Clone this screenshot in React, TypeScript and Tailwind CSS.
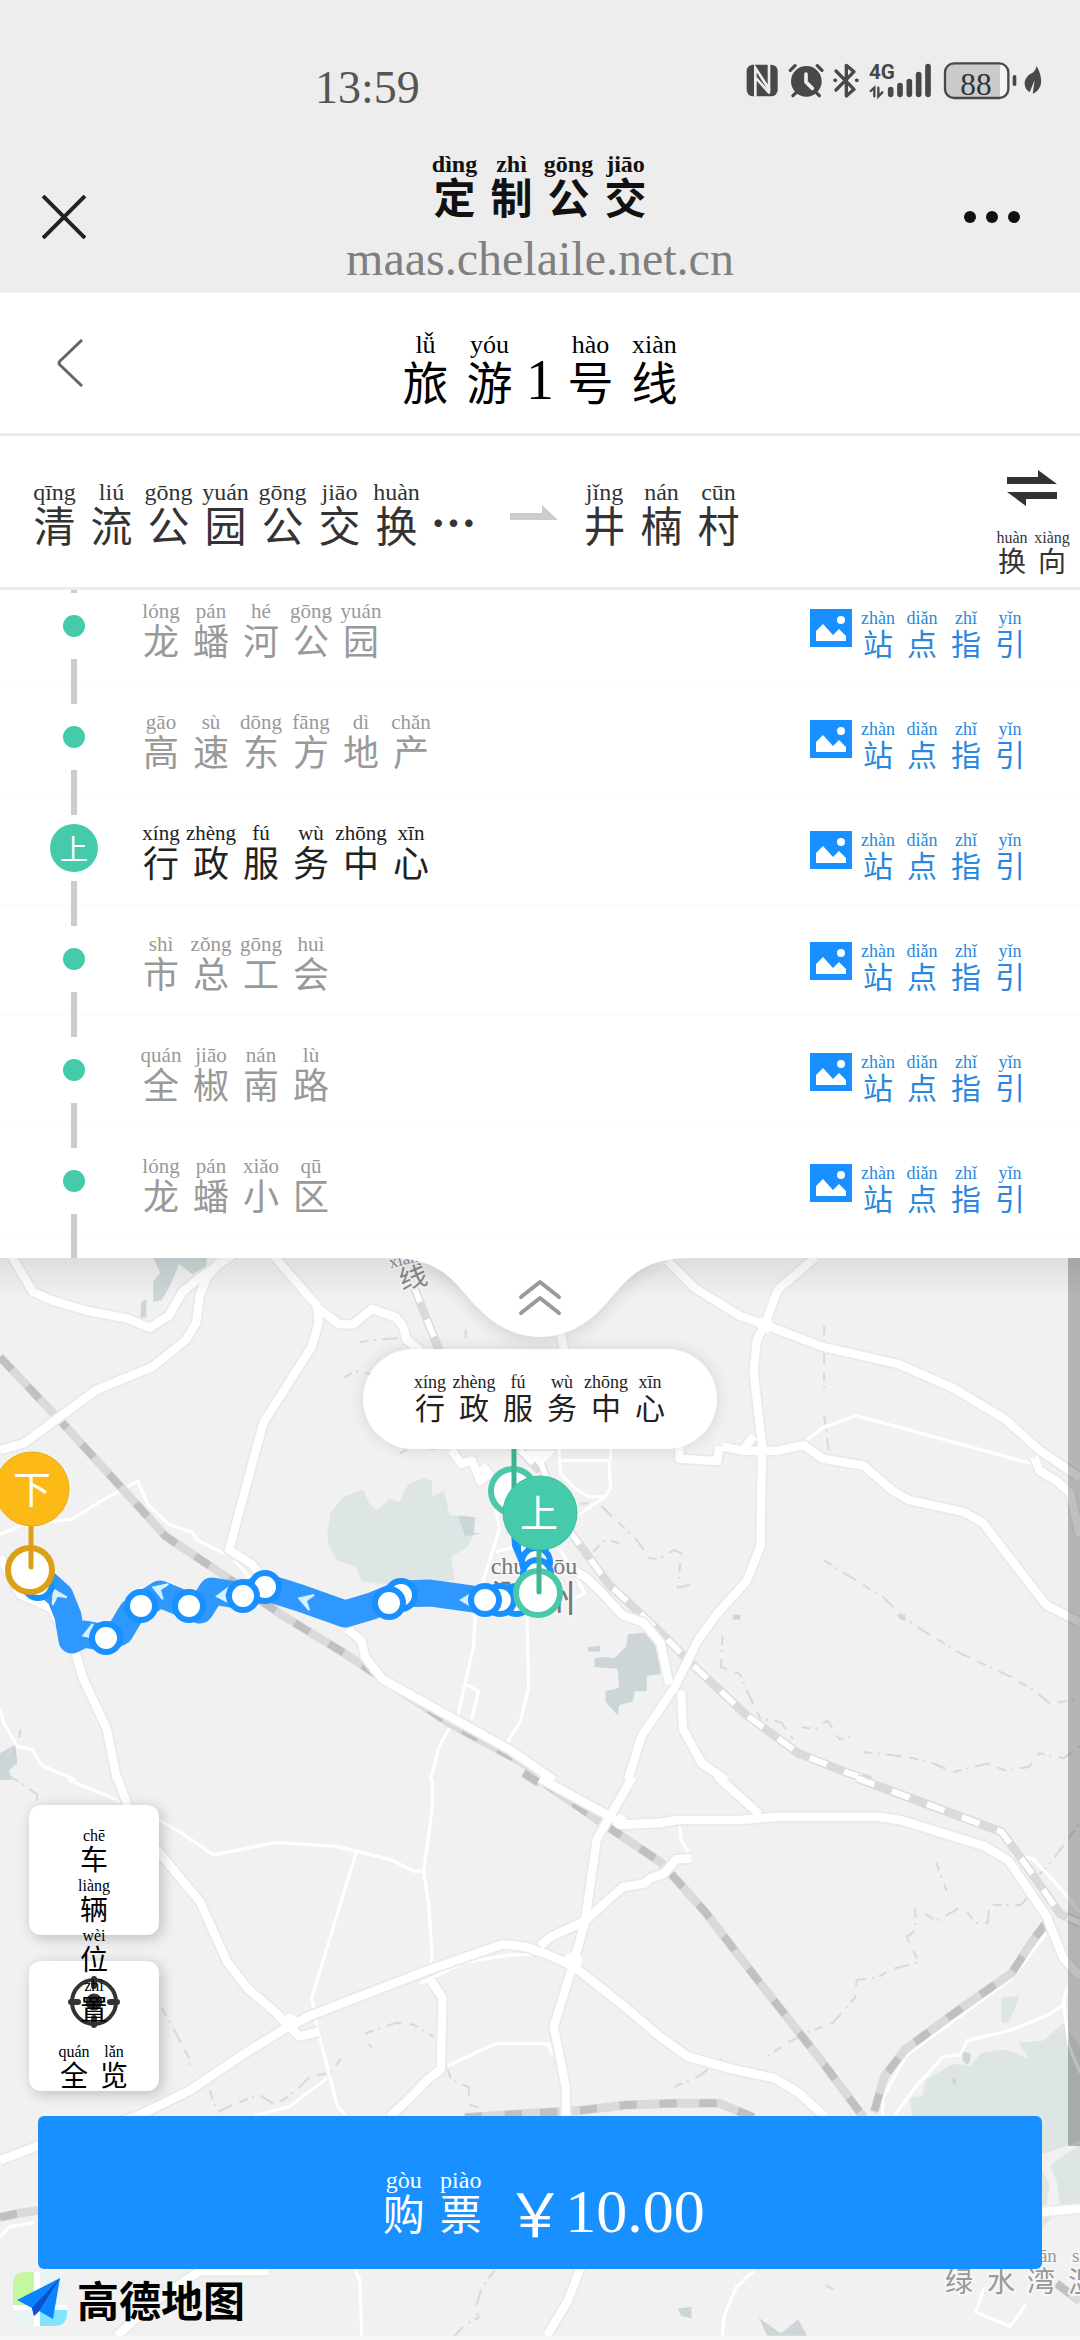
import clsx from 'clsx'

type Syllable = [string, string]
type RubySize = 'xs' | 'sm' | 'md' | 'lg' | 'xl'

interface Stop {
  name: Syllable[]
  boarding?: boolean
}

interface Tile {
  transform: string
  lakes?: string[]
  ponds?: string[]
  streams: string[]
  rails: string[]
  lightRails: string[]
  minor: string[]
  roads: string[]
}

const cjk = "font-['Noto_Sans_CJK_SC',sans-serif]"
const serif = "font-['Liberation_Serif','Noto_Sans_CJK_SC',serif]"

const cellStyles: Record<RubySize, string> = {
  xs: 'w-10',
  sm: 'w-11',
  md: 'w-[50px]',
  lg: 'w-[57px]',
  xl: 'w-16',
}

const pinyinStyles: Record<RubySize, string> = {
  xs: 'text-[16px] leading-[16px] h-4',
  sm: 'text-[18px] leading-[18px] h-[18px]',
  md: 'text-[21px] leading-[20px] h-5',
  lg: 'text-[24px] leading-[22px] h-[22px]',
  xl: 'text-[26px] leading-[24px] h-6',
}

const charStyles: Record<RubySize, string> = {
  xs: 'text-[28px] leading-[28px]',
  sm: 'text-[30px] leading-[30px]',
  md: 'text-[36px] leading-[36px]',
  lg: 'text-[42px] leading-[42px]',
  xl: 'text-[46px] leading-[46px]',
}

const stops: Stop[] = [
  { name: [['龙', 'lóng'], ['蟠', 'pán'], ['河', 'hé'], ['公', 'gōng'], ['园', 'yuán']] },
  { name: [['高', 'gāo'], ['速', 'sù'], ['东', 'dōng'], ['方', 'fāng'], ['地', 'dì'], ['产', 'chǎn']] },
  {
    name: [['行', 'xíng'], ['政', 'zhèng'], ['服', 'fú'], ['务', 'wù'], ['中', 'zhōng'], ['心', 'xīn']],
    boarding: true,
  },
  { name: [['市', 'shì'], ['总', 'zǒng'], ['工', 'gōng'], ['会', 'huì']] },
  { name: [['全', 'quán'], ['椒', 'jiāo'], ['南', 'nán'], ['路', 'lù']] },
  { name: [['龙', 'lóng'], ['蟠', 'pán'], ['小', 'xiǎo'], ['区', 'qū']] },
]

const guide: Syllable[] = [['站', 'zhàn'], ['点', 'diǎn'], ['指', 'zhǐ'], ['引', 'yǐn']]

const tiles: Tile[] = [
  {
    transform: 'translate(0 1240) scale(.3444)',
    lakes: [
      '950,850 960,790 1000,745 1055,725 1075,770 1095,785 1130,752 1160,760 1185,710 1230,690 1255,700 1255,745 1290,728 1305,800 1330,800 1365,812 1380,840 1360,890 1310,920 1320,985 1250,1000 1190,1010 1050,990 1035,950 980,930 955,890',
    ],
    ponds: [
      '440,40 600,40 600,75 560,100 520,70 495,130 470,175 445,180 445,120 465,95',
      '410,180 425,172 425,225 408,225',
      '0,1490 45,1465 50,1520 25,1540 35,1568 0,1568',
      '1330,800 1380,805 1375,850 1400,852 1350,860',
    ],
    streams: ['1045,297 1090,290 1150,285 1165,310', '1000,400 1030,380 1090,392', '1352,260 1352,300', '60,1420 55,1450 20,1500', '1160,620 1200,600 1290,610'],
    rails: ['0,340 180,530 390,760 480,860 660,980 820,1090 1000,1200 1300,1400 1568,1545'],
    lightRails: ['1200,130 1235,220 1275,320', '1510,610 1568,670'],
    minor: [
      '0,855 60,830 210,810 290,760 400,700 430,770 490,825 560,850 570,870 660,915',
      '680,930 720,975 780,1010',
      '1380,1090 1375,1180 1350,1290 1390,1310 1370,1390',
      '1350,1290 1330,1380 1310,1410 1275,1470 1250,1568',
      '1530,1090 1535,1300 1510,1400 1465,1470',
      '0,1360 10,1400 50,1470 95,1480 120,1525 220,1568',
      '1440,780 1450,840 1400,1000 1380,1090',
      '1440,905 1500,890',
    ],
    roads: [
      '30,40 95,150 150,175 250,205 370,228 435,255 490,220 530,150 580,110 680,40',
      '640,60 600,110 580,160 570,240 540,290 440,370 280,435 70,590 0,610',
      '790,40 850,110 920,190 925,240 905,310 765,530 735,640 665,900 730,940 770,990',
      '920,195 985,245 1025,245 1080,200 1150,225 1170,250 1180,290 1220,320',
      '0,920 60,1030 150,1070 220,1200 240,1270 310,1420 340,1568',
      '1010,1130 1050,1165 1060,1210 1110,1275 1480,1480 1568,1540',
      '1310,610 1340,650 1370,640 1395,700 1420,680 1400,655',
    ],
  },
  {
    transform: 'translate(540 1240) scale(.3444)',
    ponds: [
      '255,1145 310,1140 350,1200 350,1260 310,1265 310,1310 275,1310 270,1340 230,1350 225,1380 190,1340 190,1310 230,1300 225,1245 158,1240 158,1215 190,1210 215,1215 250,1180',
      '138,1182 175,1178 175,1195 140,1195',
      '560,1088 582,1088 582,1102 560,1102',
      '1035,1088 1060,1088 1060,1104 1050,1104',
    ],
    streams: [
      '115,765 170,765 280,870 320,925 345,925 390,900 410,910 400,1010 460,995',
      '155,905 190,870 230,880',
      '530,1150 525,1240 580,1260 620,1350 640,1390 700,1400 735,1450',
      '825,930 1000,1040 1060,1100 1130,1145 1220,1200 1370,1270 1430,1305 1480,1345 1568,1335',
      '760,1415 800,1420 835,1395 850,1420 870,1450 910,1440',
      '940,1487 1060,1500 1130,1515 1200,1545 1300,1520 1350,1540 1420,1530 1450,1490 1520,1505 1568,1470',
      '825,250 825,440',
      '825,510 838,610',
    ],
    rails: [],
    lightRails: ['0,640 45,760 90,850 200,1000 340,1130 450,1240 600,1380 750,1490 900,1550 960,1568'],
    minor: [
      '770,585 820,545 920,510 1100,560 1430,650',
      '55,640 200,640 205,720 190,745 110,800',
      '55,600 60,680 100,720 140,745 190,745',
      '205,600 205,640',
      '60,900 130,1025 100,1040',
    ],
    roads: [
      '370,60 450,140 580,220 650,245 820,310 1040,360 1200,430 1350,520 1450,610 1568,690',
      '800,50 690,145 655,240 630,290 620,380 645,600 640,890 600,990 510,1090 460,1160 390,1300 295,1440 255,1568',
      '410,1310 415,1420 470,1520 540,1568',
      '530,600 590,612 690,612 765,595 820,635 940,655 1020,725 1070,755 1230,790 1285,820 1400,970 1470,1060 1568,1110',
      '100,960 140,985 185,1030 240,1090 300,1110 350,1170 375,1290',
      '405,600 405,635 515,642 520,600',
      '1435,630 1450,670 1500,700 1540,735 1568,860',
      '60,270 70,320',
      '590,610 620,570',
      '0,1540 40,1568',
    ],
  },
  {
    transform: 'translate(0 1780) scale(.3444 .3571)',
    streams: [
      '470,640 500,690 550,780 550,820',
      '610,870 630,930 700,900 750,880 800,910 860,870 900,830 960,820 990,780',
      '1060,710 1150,680 1200,685 1260,720',
      '1300,810 1310,840 1360,860 1365,910 1400,920',
      '1435,1375 1400,1420 1380,1480 1390,1505 1350,1525 1320,1556',
      '30,-10 108,40 108,80',
      '1070,740 1080,750',
    ],
    rails: ['0,1225 45,1215 110,1205', '1350,945 1568,932', '1520,-20 1568,10'],
    lightRails: [],
    minor: [
      '200,0 350,60',
      '460,110 530,150 620,210 800,175 970,185 1040,200 1140,225 1200,255 1225,255',
      '1255,0 1255,80 1230,255 1245,350 1255,490 1250,520',
      '1035,200 905,610 920,690 980,915 1005,940',
      '950,835 840,915 740,940',
      '1300,800 1440,738 1568,738',
      '1030,1370 1045,1400 1050,1556',
      '0,1280 30,1250 100,1240',
      '1220,570 1350,510 1480,490 1568,488',
    ],
    roads: [
      '340,-10 370,70 410,140 460,200 580,340 660,510 720,585 800,650 840,690',
      '0,1065 110,1025 390,945 550,870 720,760 830,695 900,660 1250,530 1460,460 1530,468 1568,482',
      '1250,560 1285,610 1280,810 1240,840 1190,890 1130,945',
      '340,1556 450,1460 580,1375 780,1375',
      '840,690 870,718 925,705',
    ],
  },
  {
    transform: 'translate(540 1780) scale(.3444 .3571)',
    lakes: [
      '1080,945 1075,890 1110,885 1120,840 1200,795 1250,800 1280,765 1350,755 1420,780 1390,735 1460,730 1520,680 1568,750 1568,1010 1470,1045 1400,1050 1200,1060',
      '1480,1080 1568,1020 1568,1190 1510,1190 1500,1120',
      '1455,1090 1480,1130 1470,1190 1455,1190',
      '1340,610 1390,605 1388,620 1360,680 1340,680',
      '1455,1215 1485,1225 1455,1260',
    ],
    ponds: [
      '1225,760 1250,765 1250,785 1240,798 1228,785',
      '635,1506 700,1550 750,1510 775,1556 660,1556',
      '400,1480 440,1475 440,1508 410,1500',
      '1198,835 1208,835 1208,852 1198,852',
    ],
    streams: [
      '1150,230 1180,310',
      '1090,360 1090,420 1065,440 1100,510 1020,530 980,553 920,560 915,610 850,680 780,705 720,735 650,780',
      '1120,375 1150,395 1215,360',
      '1240,370 1265,400 1300,400 1305,350 1395,350 1415,330',
      '1450,265 1480,235 1568,120',
      '390,860 400,855 460,830 530,780',
      '830,1415 855,1428',
    ],
    rails: [
      '0,0 180,120 350,230 480,370 640,570 820,790 940,945',
      '0,932 120,925 250,910 400,905 520,905 620,945',
      '1470,400 1430,450 1370,540 1200,655 1060,755 1000,830 970,930',
      '1500,1410 1568,1460',
    ],
    lightRails: ['920,-5 1340,145 1420,250 1510,375 1568,400'],
    minor: [
      '405,130 410,170 430,200',
      '1470,430 1370,555 1065,770 995,890 995,940',
      '1030,940 1090,860 1170,775 1220,770 1240,730 1370,700 1480,655 1520,630',
      '0,738 25,740 35,770',
      '1370,210 1430,220 1480,270 1568,370',
      '620,1375 570,1420 535,1500 530,1556',
      '1290,1420 1265,1490 1365,1530 1410,1470',
      '1530,580 1520,620 1535,740 1568,820',
    ],
    roads: [
      '0,-5 190,95 240,125 350,120 400,112 580,112 690,103 980,103 1050,113 1290,185 1360,225 1470,380 1520,500 1568,550',
      '270,-10 165,165 130,400 95,520 40,690 75,860 75,945',
      '0,480 95,520 240,630 350,720 430,775 560,810 680,835 750,875 830,945',
      '515,-10 630,90 630,110',
      '0,465 30,440 130,395 240,300 305,290 320,275 360,262 395,222 440,220',
      '120,1360 80,1460 20,1556',
      '1455,1210 1568,1200',
    ],
  },
]

const routePath = 'M40 1578L60 1596L68 1616L72 1640L84 1634L106 1638L120 1632L132 1612L141 1606L160 1594L189 1606L200 1610L212 1591L243 1596L265 1587L300 1598L345 1614L372 1606L389 1599L401 1594L430 1593L480 1600L538 1600'

const routeStops = [
  [38, 1584], [106, 1638], [141, 1606], [189, 1606], [265, 1587], [243, 1596], [401, 1595], [389, 1603],
  [516, 1600], [500, 1600], [485, 1600], [532, 1548], [536, 1562], [537, 1574],
]

const arrows = [
  [56, 1594, 62], [88, 1634, -20], [158, 1589, 20], [222, 1596, -5], [304, 1600, 18], [466, 1600, 0],
]

function Ruby({ text, size, className }: { text: Syllable[]; size: RubySize; className?: string }) {
  return (
    <span className={clsx('flex items-end', className)}>
      {text.map(([char, pinyin], i) => (
        <span key={i} className={clsx('flex shrink-0 flex-col items-center whitespace-nowrap', cellStyles[size])}>
          {pinyin && <span className={pinyinStyles[size]}>{pinyin}</span>}
          <span className={clsx(cjk, charStyles[size])}>{char}</span>
        </span>
      ))}
    </span>
  )
}

function StatusIcons() {
  return (
    <div className="flex items-center text-[#484848]">
      <svg className="h-10 w-[34px]" viewBox="70 60 102 120" fill="none">
        <rect x="72" y="74" width="93" height="95" rx="19" fill="currentColor" />
        <path d="M98 170V84L141 150M98 112L141 160M139 72V160" stroke="#ededed" strokeWidth="8" />
      </svg>
      <svg className="ml-2 h-10 w-9" viewBox="200 60 108 120" fill="none" stroke="currentColor" strokeLinecap="round">
        <circle cx="255" cy="124" r="46" fill="currentColor" stroke="none" />
        <path d="M207 91L221 77M302 91L288 77M215 167L228 154M294 167L281 154" strokeWidth="10" />
        <path d="M254 102V126L273 145" stroke="#ededed" strokeWidth="11" />
      </svg>
      <svg className="ml-2 h-10 w-7" viewBox="338 60 84 120" fill="none" stroke="currentColor" strokeWidth="10" strokeLinejoin="round" strokeLinecap="round">
        <path d="M350 93L404 148L381 168V76L404 95L350 150" />
        <path d="M347 121H348M412 121H413" strokeWidth="11" />
      </svg>
      <svg className="ml-2 h-10 w-[66px]" viewBox="444 60 198 120" fill="none" stroke="currentColor" strokeLinecap="round">
        <text x="447" y="118" fontSize="62" fontWeight="700" fill="currentColor" stroke="none" className="font-['Roboto',sans-serif]">4G</text>
        <path d="M452 153L463 143V169M475 143V169L487 157" strokeWidth="7" />
        <path d="M512 149V163M540 137V163M568 125V163M596 104V163M624 80V163" strokeWidth="17" />
      </svg>
      <svg className="ml-2 h-10 w-[76px]" viewBox="664 60 228 120" fill="none">
        <rect x="673" y="70" width="190" height="104" rx="27" fill="#f4f4f4" />
        <path d="M700 70H838V174H700Q673 174 673 147V97Q673 70 700 70Z" fill="#cbcbcb" />
        <rect x="673" y="70" width="190" height="104" rx="27" stroke="currentColor" strokeWidth="7" />
        <rect x="876" y="105" width="11" height="33" rx="5" fill="currentColor" />
        <text x="766" y="166" fontSize="94" textAnchor="middle" fill="#333" className="font-['Liberation_Serif',serif]">88</text>
      </svg>
      <svg className="ml-1 h-10 w-[22px]" viewBox="900 60 66 120">
        <path d="M944 78Q962 110 956 136Q948 156 932 161L938 120L923 157Q906 146 908 126Q912 106 932 98Q941 92 944 78Z" fill="currentColor" />
      </svg>
    </div>
  )
}

function StopRow({ stop }: { stop: Stop }) {
  return (
    <li className="flex h-[111px] border-b border-[#fafafa]">
      <div className="ml-[46px] flex w-14 flex-col items-center justify-between">
        <span className="h-[21px] w-1.5 bg-[#ccc]" />
        {stop.boarding ? (
          <span className={clsx('flex size-12 items-center justify-center rounded-full bg-[#45cbac] text-[28px] leading-[28px] text-white', cjk)}>上</span>
        ) : (
          <span className="size-[22px] rounded-full bg-[#45cbac]" />
        )}
        <span className="-mb-px h-6 w-1.5 bg-[#ccc]" />
      </div>
      <Ruby
        text={stop.name}
        size="md"
        className={clsx('ml-[34px] mt-[29px] self-start', stop.boarding ? 'text-[#222]' : 'text-[#999]')}
      />
      <a href="#guide" className="mr-12 ml-auto mt-[37px] flex items-start gap-1 self-start text-[#2b88dc]">
        <svg className="h-[38px] w-[42px]" viewBox="0 0 42 38">
          <path d="M0 0H42V38H0Z" fill="#1890ff" />
          <path d="M6 32V22L13 15L23 26L29 20L36 27V32Z" fill="#fff" />
          <circle cx="31" cy="11" r="4" fill="#fff" />
        </svg>
        <Ruby text={guide} size="sm" />
      </a>
    </li>
  )
}

function Lines({ points, stroke, width, dash }: { points: string[]; stroke: string; width: number; dash?: string }) {
  return (
    <>
      {points.map((p) => (
        <polyline key={p} points={p} fill="none" stroke={stroke} strokeWidth={width} strokeDasharray={dash} strokeLinejoin="round" />
      ))}
    </>
  )
}

function Ring({ x, y, color }: { x: number; y: number; color: string }) {
  return <circle cx={x} cy={y} r="22" fill="#fff" stroke={color} strokeWidth="6" />
}

function MapCanvas() {
  return (
    <svg className="absolute inset-0 size-full" viewBox="0 1258 1080 1082" preserveAspectRatio="xMidYMid slice">
      {tiles.map((t) => (
        <g key={t.transform} transform={t.transform}>
          {t.lakes?.map((p) => <polygon key={p} points={p} fill="#dde6e5" />)}
          {t.ponds?.map((p) => <polygon key={p} points={p} fill="#ccd6d8" />)}
          <Lines points={t.streams} stroke="#d3dcdd" width={6} dash="26 14 6 20 44 24" />
          <Lines points={t.minor} stroke="#fff" width={9} />
          <Lines points={t.rails} stroke="#dadada" width={25} />
          <Lines points={t.rails} stroke="#c0c0c0" width={22} dash="50 66" />
          <Lines points={t.lightRails} stroke="#dadada" width={25} />
          <Lines points={t.lightRails} stroke="#fff" width={17} dash="54 54" />
        </g>
      ))}
      {tiles.map((t) => (
        <g key={t.transform} transform={t.transform}>
          <Lines points={t.roads} stroke="#e6ebe6" width={34} />
        </g>
      ))}
      {tiles.map((t) => (
        <g key={t.transform} transform={t.transform}>
          <Lines points={t.roads} stroke="#fff" width={24} />
        </g>
      ))}
      <g fill="#fff">
        <circle cx="765" cy="1325" r="8" />
        <circle cx="573" cy="1961" r="9" />
        <circle cx="290" cy="2023" r="9" />
        <circle cx="620" cy="1822" r="7" />
      </g>

      <g className={cjk} fill="#8a8a8a" stroke="#f6f6f6" strokeWidth="4" paintOrder="stroke" textAnchor="middle">
        <g transform="rotate(-14 413 1277)">
          <text x="413" y="1287" fontSize="28">线</text>
          <text x="408" y="1263" fontSize="17" className={serif}>xiàn</text>
        </g>
        <g fill="#777">
          <text x="510" y="1612" fontSize="38">滁</text>
          <text x="557" y="1612" fontSize="38">州</text>
          <text x="508" y="1574" fontSize="24" className={serif}>chú</text>
          <text x="554" y="1574" fontSize="24" className={serif}>zhōu</text>
        </g>
        <g fill="#999">
          <text x="959" y="2292" fontSize="28">绿</text>
          <text x="1001" y="2292" fontSize="28">水</text>
          <text x="1041" y="2292" fontSize="28">湾</text>
          <text x="1082" y="2292" fontSize="28">湿</text>
          <text x="1041" y="2262" fontSize="19" className={serif}>wān</text>
          <text x="1083" y="2262" fontSize="19" className={serif}>shī</text>
        </g>
      </g>

      <path d={routePath} fill="none" stroke="#2e98ff" strokeWidth="27" strokeLinejoin="round" strokeLinecap="round" />
      <path d="M513 1492L517 1545L538 1595" fill="none" stroke="#1890ff" strokeWidth="10" />
      {arrows.map(([x, y, angle]) => (
        <path key={x} d="M8 -8L-5 0L8 8L2 0Z" transform={`translate(${x} ${y}) rotate(${angle})`} fill="#d5f0ff" stroke="#d5f0ff" strokeWidth="2" />
      ))}
      {routeStops.map(([x, y]) => (
        <circle key={x} cx={x} cy={y} r="14" fill="#fff" stroke="#1890ff" strokeWidth="6" />
      ))}

      <Ring x={513} y={1491} color="#4ac8a9" />
      <path d="M514 1440V1491" stroke="#40b394" strokeWidth="5" />
      <Ring x={538} y={1593} color="#4ac8a9" />
      <path d="M539 1545V1592" stroke="#40b394" strokeWidth="5" strokeLinecap="round" />
      <circle cx="540" cy="1513" r="37" fill="#45cbac" stroke="#3dbd9e" />
      <Ring x={30} y={1570} color="#dba016" />
      <path d="M31 1525V1567" stroke="#dba016" strokeWidth="5" strokeLinecap="round" />
      <circle cx="32" cy="1489" r="37" fill="#fdb915" stroke="#e9ab14" />
      <g className={cjk} fill="#fff" fontSize="38" textAnchor="middle">
        <text x="539" y="1527">上</text>
        <text x="32" y="1503">下</text>
      </g>
      <path d="M525 1451H555L540 1467Z" fill="#fff" />
    </svg>
  )
}

export default function App() {
  return (
    <div className={clsx('flex min-h-screen flex-col bg-white', serif)}>
      <header className="flex h-[293px] flex-col bg-[#ededed]">
        <div className="flex items-start justify-between pt-[60px] pr-9 pl-[315px]">
          <time className="pt-1.5 text-[46px] leading-[44px] text-[#555]">13:59</time>
          <StatusIcons />
        </div>
        <div className="flex items-start justify-between px-[42px] pt-[43px]">
          <button type="button" aria-label="关闭" className="w-[100px] pt-[42px]">
            <svg className="size-11" viewBox="0 0 44 44" fill="none" stroke="#222" strokeWidth="4">
              <path d="M1 1L43 43M43 1L1 43" />
            </svg>
          </button>
          <div className="flex flex-col items-center">
            <Ruby size="lg" className="font-bold text-[#111]" text={[['定', 'dìng'], ['制', 'zhì'], ['公', 'gōng'], ['交', 'jiāo']]} />
            <p className="mt-[18px] text-[48px] leading-[48px] text-[#7f7f7f]">maas.chelaile.net.cn</p>
          </div>
          <button type="button" aria-label="更多" className="flex w-[100px] justify-end pt-[58px] pr-[18px]">
            <svg className="h-3 w-14" viewBox="0 0 56 12" fill="#111">
              <circle cx="6" cy="6" r="6" />
              <circle cx="28" cy="6" r="6" />
              <circle cx="50" cy="6" r="6" />
            </svg>
          </button>
        </div>
      </header>

      <nav className="flex h-[143px] items-center border-b-3 border-[#ebebeb] px-14">
        <button type="button" aria-label="返回" className="w-[100px]">
          <svg className="h-12 w-7" viewBox="0 0 28 48" fill="none" stroke="#666" strokeWidth="3">
            <path d="M26 1L4 22Q2 24 4 26L26 47" />
          </svg>
        </button>
        <h1 className="flex flex-1 items-end justify-center pt-[10px] text-black">
          <Ruby size="xl" text={[['旅', 'lǚ'], ['游', 'yóu']]} />
          <span className="w-[37px] text-center text-[56px] leading-[46px]">1</span>
          <Ruby size="xl" text={[['号', 'hào'], ['线', 'xiàn']]} />
        </h1>
        <span className="w-[100px]" />
      </nav>

      <section className="flex h-[154px] items-center border-b-3 border-[#ebebeb] pt-0.5 pl-[26px] text-[#333]">
        <div className="flex items-end">
          <Ruby
            size="lg"
            text={[['清', 'qīng'], ['流', 'liú'], ['公', 'gōng'], ['园', 'yuán'], ['公', 'gōng'], ['交', 'jiāo'], ['换', 'huàn']]}
          />
          <span className={clsx('w-[57px] pb-1 text-center text-[46px] leading-[42px] font-bold', cjk)}>…</span>
        </div>
        <svg className="mr-[18px] ml-7 h-4 w-12" viewBox="0 0 48 16" fill="#ccc">
          <path d="M0 8H32V0L48 15H0Z" />
        </svg>
        <Ruby size="lg" text={[['井', 'jǐng'], ['楠', 'nán'], ['村', 'cūn']]} />
        <button type="button" className="mr-2 ml-auto flex flex-col items-center gap-6 self-stretch pt-8">
          <svg className="h-9 w-[50px]" viewBox="0 0 50 36" fill="#333">
            <path d="M0 7H31V0L50 14H0ZM50 22H0L19 36V29H50Z" />
          </svg>
          <Ruby size="xs" text={[['换', 'huàn'], ['向', 'xiàng']]} />
        </button>
      </section>

      <section className="relative z-10 h-[668px] overflow-hidden bg-white">
        <ol className="-mt-[18px]">
          {stops.map((stop, i) => (
            <StopRow key={i} stop={stop} />
          ))}
          <li className="ml-[46px] flex w-14 justify-center">
            <span className="h-5 w-1.5 bg-[#ccc]" />
          </li>
        </ol>
      </section>

      <main className="relative flex flex-1 flex-col justify-end overflow-hidden bg-[#f1f1f1]">
        <MapCanvas />
        <div className="absolute inset-x-0 top-0 h-10 bg-linear-to-b from-black/8 to-transparent" />
        <div className="absolute top-0 right-0 h-[888px] w-3 bg-black/25" />

        <div className="absolute top-[91px] left-1/2 flex h-[100px] -translate-x-1/2 items-center rounded-full bg-white px-[45px] pb-1 text-[#222] shadow-[0_0_16px_rgba(0,0,0,0.12)]">
          <Ruby size="sm" text={stops[2].name} />
        </div>
        <button type="button" aria-label="展开" className="absolute top-0 left-1/2 -translate-x-1/2">
          <svg className="h-[90px] w-[300px] drop-shadow-[0_4px_8px_rgba(0,0,0,0.12)]" viewBox="0 0 300 90" fill="none">
            <path d="M0 0C55 0 65 27 88 50C104 67 125 79 150 79C175 79 196 67 212 50C235 27 245 0 300 0Z" fill="#fff" />
            <path d="M131 39L150 24L169 39M131 55L150 40L169 55" stroke="#999" strokeWidth="4" strokeLinecap="round" strokeLinejoin="round" />
          </svg>
        </button>

        <div className="relative ml-[29px] flex w-[130px] flex-col gap-[26px]">
          <button type="button" className="relative z-10 flex h-[130px] flex-col items-center gap-[6px] rounded-xl bg-white pt-[23px] text-black shadow-[3px_3px_14px_rgba(0,0,0,0.22)]">
            <Ruby size="xs" text={[['车', 'chē']]} />
            <Ruby size="xs" text={[['辆', 'liàng']]} />
            <Ruby size="xs" text={[['位', 'wèi']]} />
            <Ruby size="xs" text={[['置', 'zhì']]} />
          </button>
          <button type="button" className="flex h-[130px] flex-col items-center gap-4 rounded-xl bg-white pt-[15px] text-black shadow-[3px_3px_14px_rgba(0,0,0,0.22)]">
            <svg className="size-[52px]" viewBox="0 0 52 52" fill="none" stroke="#333">
              <circle cx="26" cy="26" r="22" strokeWidth="4" />
              <circle cx="26" cy="26" r="8" fill="#333" />
              <path d="M26 3V10M26 42V49M3 26H10M42 26H49" strokeWidth="6" strokeLinecap="round" />
            </svg>
            <Ruby size="xs" text={[['全', 'quán'], ['览', 'lǎn']]} />
          </button>
        </div>

        <button type="button" className="relative mx-[38px] mt-[25px] flex h-[153px] items-end justify-center rounded-md bg-[#1890ff] pb-9 text-white">
          <Ruby size="lg" text={[['购', 'gòu'], ['票', 'piào']]} />
          <span className={clsx('ml-4 text-[60px] leading-[44px]', cjk)}>￥</span>
          <span className="text-[62px] leading-[44px]">10.00</span>
        </button>

        <div className="relative flex items-center gap-2.5 py-[3px] pl-[13px]">
          <svg className="size-[54px]" viewBox="0 0 54 54">
            <rect width="54" height="54" rx="13" fill="#fff" />
            <path d="M0 33V13Q0 0 13 0H21V33Z" fill="#c3f7a0" />
            <path d="M27 0H41Q54 0 54 13V33H27Z" fill="#e9f3f3" />
            <path d="M27 38H54V41Q54 54 41 54H27Z" fill="#83e5fd" />
            <path d="M0 38H21V54H13Q0 54 0 41Z" fill="#e9f3f3" />
            <path d="M47 6L4 28L19 36L21 44L26 39L40 47Z" fill="#0a84ff" />
            <path d="M47 6L19 36L21 44L26 39Z" fill="#0b4ed0" />
          </svg>
          <span className={clsx('text-[42px] leading-[42px] font-bold text-black', cjk)}>高德地图</span>
        </div>
        <div className="relative h-[11px] border-b-4 border-[#f7f7f7]" />
      </main>
    </div>
  )
}
